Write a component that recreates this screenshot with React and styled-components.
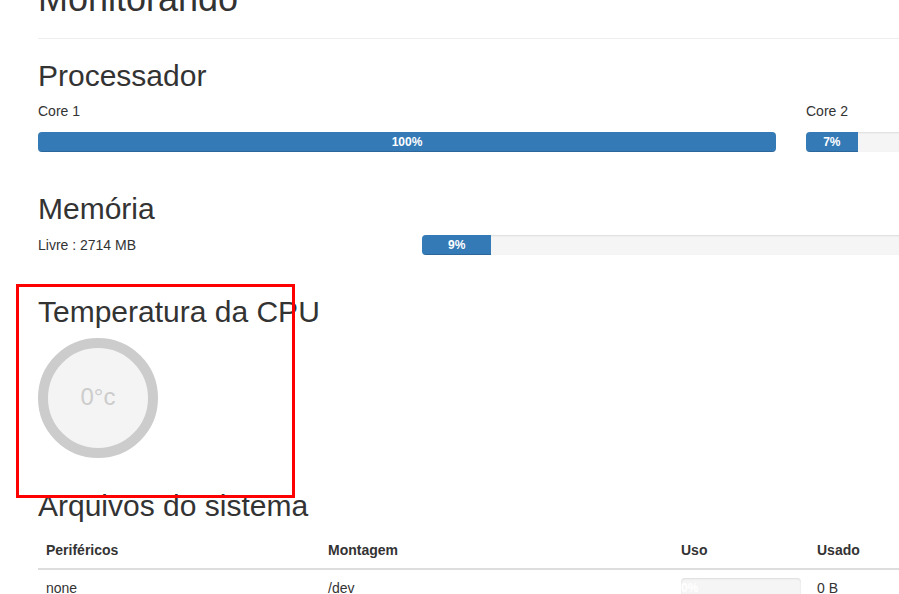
import React from 'react'
import styled, { createGlobalStyle } from 'styled-components'

const GlobalStyle = createGlobalStyle`
  html, body {
    margin: 0;
    overflow: hidden;
    background: #fff;
  }
  body {
    font-family: "Liberation Sans", Arial, Helvetica, sans-serif;
    font-size: 14px;
    line-height: 1.42857;
    color: #333;
  }
  * { box-sizing: border-box; }
`

const cores = [
  { name: 'Core 1', value: 100 },
  { name: 'Core 2', value: 7 },
]

const memory = { free: 2714, used: 9.4 }

const disks = [
  { device: 'none', mount: '/dev', usage: 0, used: '0 B' },
]

const Page = styled.div`
  position: relative;
  display: flow-root;
  width: 1560px;
  padding-left: 38px;
`

const PageHeader = styled.div`
  margin: -21px 0 20px;
  padding-bottom: 9px;
  border-bottom: 1px solid #eee;
`

const Title = styled.h1`
  margin: 0 0 10px;
  font-size: 36px;
  font-weight: 500;
  line-height: 1.1;
`

const SectionTitle = styled.h2`
  margin: 20px 0 10px;
  font-size: 30px;
  font-weight: 500;
  line-height: 1.1;
`

const Section = styled.section``

const CoreGrid = styled.div`
  display: grid;
  grid-template-columns: 738px 738px;
  column-gap: 30px;
`

const MemoryGrid = styled.div`
  display: grid;
  grid-template-columns: 354px 738px;
  column-gap: 30px;
`

const Label = styled.p`
  margin: 0 0 10px;
`

const MemLabel = styled.div`
  line-height: 20px;
`

const Progress = styled.div`
  height: 20px;
  margin-bottom: ${p => (p.$flat ? '0' : '20px')};
  overflow: hidden;
  background: #f5f5f5;
  border-radius: 4px;
  box-shadow: inset 0 1px 2px rgba(0, 0, 0, 0.1);
`

const Bar = styled.div`
  height: 100%;
  font-size: 12px;
  font-weight: bold;
  line-height: 20px;
  color: #fff;
  text-align: center;
  white-space: nowrap;
  background: #337ab7;
  box-shadow: inset 0 -1px 0 rgba(0, 0, 0, 0.15);
`

const Gauge = styled.div`
  width: 120px;
  height: 120px;
  margin-bottom: 31px;
  border: 10px solid #ccc;
  border-radius: 50%;
  background: #f4f4f4;
  display: flex;
  align-items: center;
  justify-content: center;
  font-size: 24px;
  color: #ccc;
`

const Table = styled.table`
  width: 1506px;
  border-collapse: collapse;
  border-spacing: 0;
  table-layout: fixed;

  th, td {
    padding: 8px;
    line-height: 20px;
    text-align: left;
    vertical-align: top;
  }
  th {
    font-weight: bold;
    border-bottom: 2px solid #ddd;
  }
  td {
    border-top: 1px solid #ddd;
  }
`

const Highlight = styled.div`
  position: absolute;
  left: 16px;
  top: 284px;
  width: 279px;
  height: 214px;
  border: 3px solid #f00;
  pointer-events: none;
`

const ProgressBar = ({ value, flat }) => (
  <Progress $flat={flat}>
    <Bar style={{ width: `${value}%` }}>{Math.round(value)}%</Bar>
  </Progress>
)

export default function App() {
  return (
    <>
      <GlobalStyle />
      <Page>
        <PageHeader>
          <Title>Monitorando</Title>
        </PageHeader>

        <Section>
          <SectionTitle>Processador</SectionTitle>
          <CoreGrid>
            {cores.map(c => (
              <div key={c.name}>
                <Label>{c.name}</Label>
                <ProgressBar value={c.value} />
              </div>
            ))}
          </CoreGrid>
        </Section>

        <Section>
          <SectionTitle>Memória</SectionTitle>
          <MemoryGrid>
            <MemLabel>Livre : {memory.free} MB</MemLabel>
            <ProgressBar value={memory.used} />
          </MemoryGrid>
        </Section>

        <Section>
          <SectionTitle>Temperatura da CPU</SectionTitle>
          <Gauge>0°c</Gauge>
        </Section>

        <Section>
          <SectionTitle>Arquivos do sistema</SectionTitle>
          <Table>
            <colgroup>
              <col style={{ width: 282 }} />
              <col style={{ width: 353 }} />
              <col style={{ width: 136 }} />
              <col />
            </colgroup>
            <thead>
              <tr>
                <th>Periféricos</th>
                <th>Montagem</th>
                <th>Uso</th>
                <th>Usado</th>
              </tr>
            </thead>
            <tbody>
              {disks.map(d => (
                <tr key={d.mount}>
                  <td>{d.device}</td>
                  <td>{d.mount}</td>
                  <td><ProgressBar value={d.usage} flat /></td>
                  <td>{d.used}</td>
                </tr>
              ))}
            </tbody>
          </Table>
        </Section>

        <Highlight />
      </Page>
    </>
  )
}
